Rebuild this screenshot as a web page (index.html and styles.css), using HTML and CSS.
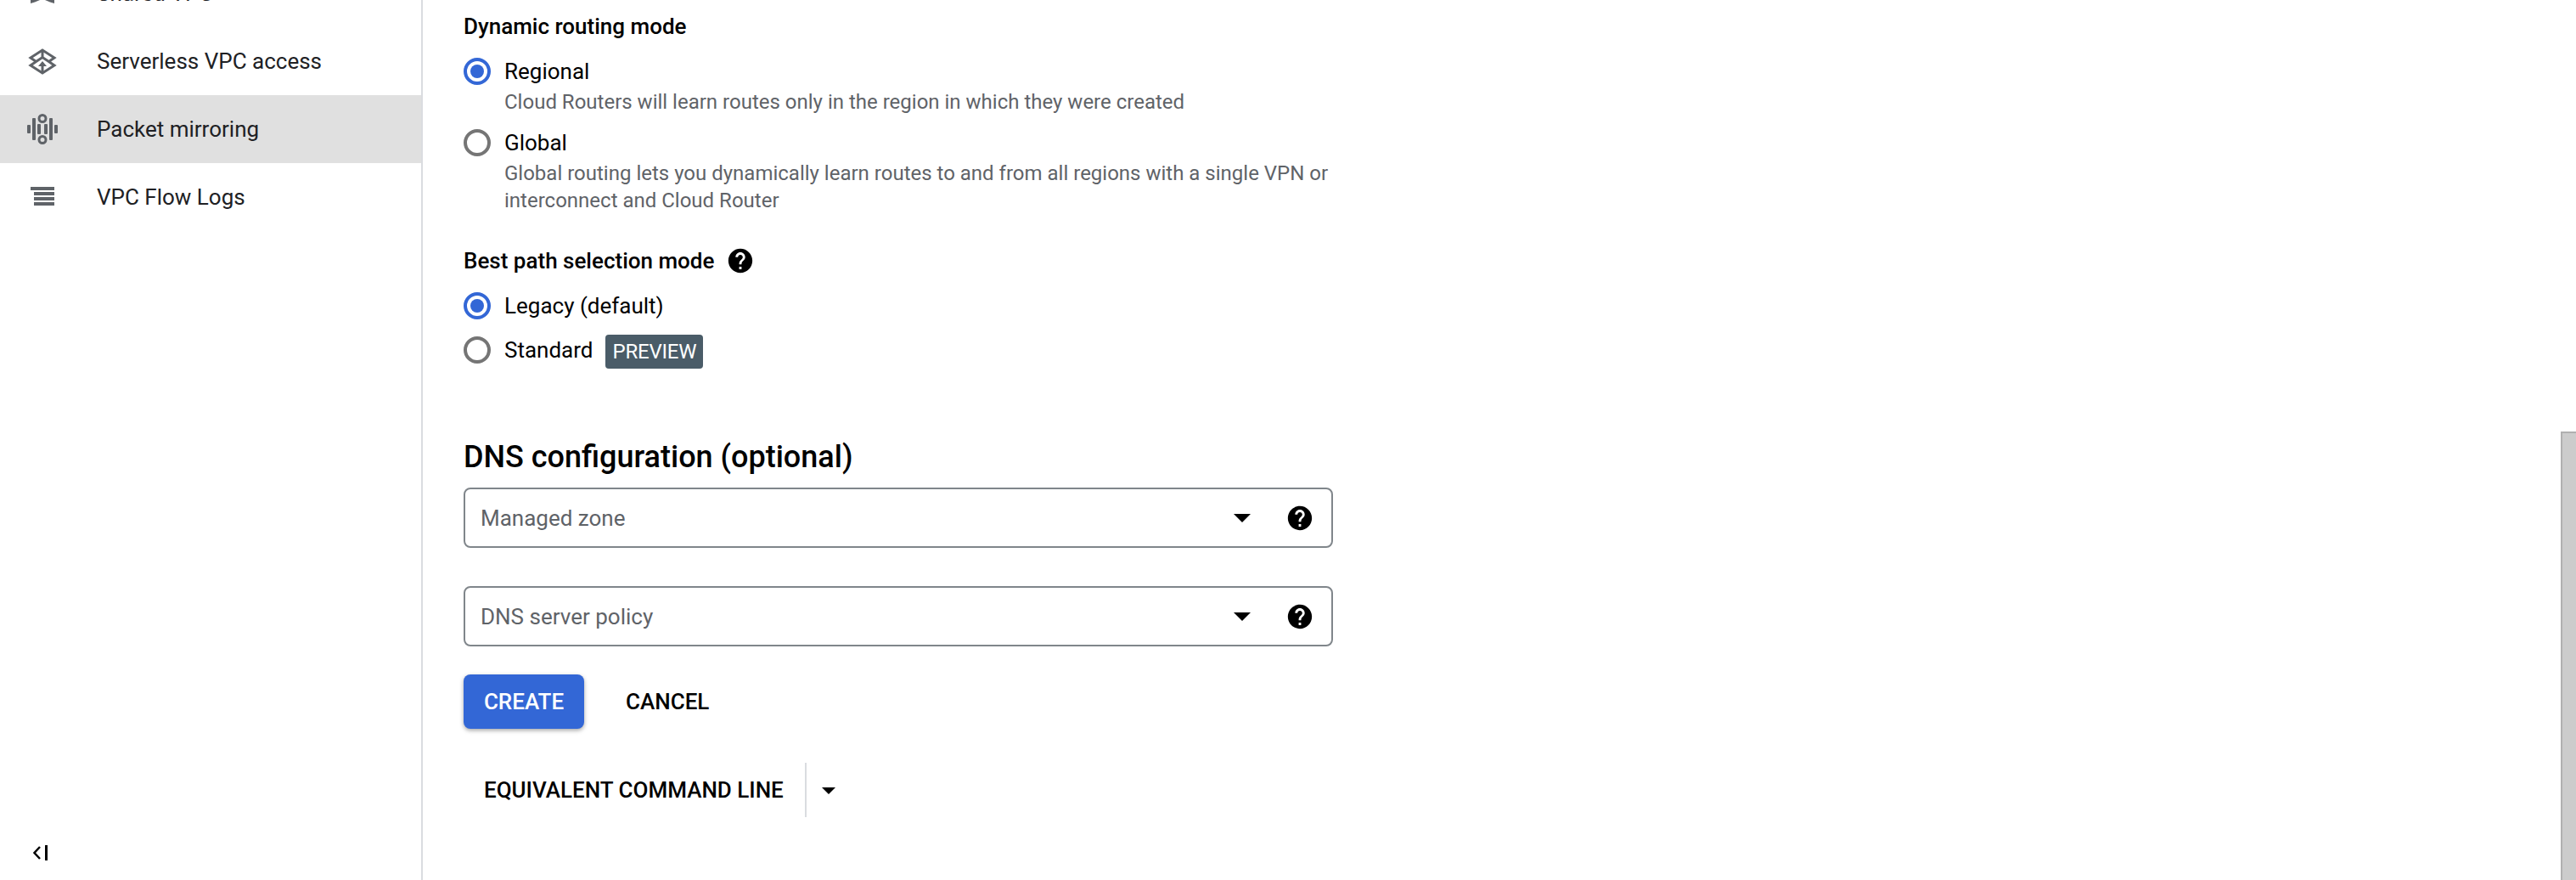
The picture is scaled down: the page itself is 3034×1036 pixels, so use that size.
FILE: index.html

```html
<!DOCTYPE html>
<html lang="en">
<head>
    <meta charset="UTF-8">
    <title>Create a VPC network</title>
    <link rel="stylesheet" href="styles.css">
</head>
<body>
    <div class="page">
        <aside class="sidebar">
            <nav class="nav-list">
                <a class="nav-item">
                    <svg class="nav-icon" viewBox="0 0 48 48"><path d="M10 32h11l-6 2.500 -5 1.500zM38 32h-11l6 2.500 5 1.500z"/></svg>
                    <span>Shared VPC</span>
                </a>
                <a class="nav-item">
                    <svg class="nav-icon" viewBox="0 0 48 48">
                        <path class="line" d="M24 11L10 20l6.500 4.500L10 29l14 9 14-9-6.500-4.500L38 20zM16.500 24.500L24 19.500l7.500 5M24 11v8"/>
                        <path d="M24 24l-5 6h3.500v7h3v-7H29z"/>
                    </svg>
                    <span>Serverless VPC access</span>
                </a>
                <a class="nav-item active">
                    <svg class="nav-icon" viewBox="0 0 48 48">
                        <rect x="6" y="19" width="4" height="10" rx="1"/>
                        <rect x="12" y="11" width="4" height="26" rx="1"/>
                        <rect x="18" y="18" width="4" height="12" rx="1"/>
                        <rect x="26" y="18" width="4" height="12" rx="1"/>
                        <rect x="32" y="11" width="4" height="26" rx="1"/>
                        <rect x="38" y="19" width="4" height="10" rx="1"/>
                        <circle class="line" cx="24" cy="11.500" r="4"/>
                        <circle class="line" cx="24" cy="36.500" r="4"/>
                    </svg>
                    <span>Packet mirroring</span>
                </a>
                <a class="nav-item">
                    <svg class="nav-icon" viewBox="0 0 48 48">
                        <rect x="10" y="12" width="28" height="4"/>
                        <rect x="14" y="18" width="24" height="4"/>
                        <rect x="14" y="24" width="24" height="4"/>
                        <rect x="14" y="30" width="24" height="4"/>
                    </svg>
                    <span>VPC Flow Logs</span>
                </a>
            </nav>
            <button class="collapse-btn">
                <svg viewBox="0 0 20 18" width="20" height="18"><path d="M9 2L2.500 9 9 16" fill="none" stroke="#000" stroke-width="2.500"/><rect x="15" y="0" width="3" height="18" fill="#000"/></svg>
            </button>
        </aside>

        <main class="content">
            <h3 class="group-title">Dynamic routing mode</h3>
            <div class="radio-row checked">
                <span class="radio"></span>
                <div class="radio-text">
                    <div class="radio-label">Regional</div>
                    <div class="radio-help">Cloud Routers will learn routes only in the region in which they were created</div>
                </div>
            </div>
            <div class="radio-row">
                <span class="radio"></span>
                <div class="radio-text">
                    <div class="radio-label">Global</div>
                    <div class="radio-help">Global routing lets you dynamically learn routes to and from all regions with a single VPN or<br>interconnect and Cloud Router</div>
                </div>
            </div>

            <h3 class="group-title path-title">
                Best path selection mode
                <svg class="help-icon" viewBox="0 0 24 24"><path d="M12 2C6.480 2 2 6.480 2 12s4.480 10 10 10 10-4.480 10-10S17.520 2 12 2zm1 17h-2v-2h2v2zm2.070-7.750l-.9.920C13.450 12.900 13 13.500 13 15h-2v-.5c0-1.100.45-2.100 1.170-2.830l1.240-1.260c.37-.36.59-.86.59-1.410 0-1.100-.9-2-2-2s-2 .9-2 2H8c0-2.210 1.790-4 4-4s4 1.790 4 4c0 .88-.36 1.680-.93 2.250z"/></svg>
            </h3>
            <div class="radio-row compact checked">
                <span class="radio"></span>
                <div class="radio-label">Legacy (default)</div>
            </div>
            <div class="radio-row compact">
                <span class="radio"></span>
                <div class="radio-label">Standard</div>
                <span class="badge">PREVIEW</span>
            </div>

            <h2 class="section-title">DNS configuration (optional)</h2>
            <div class="select-field">
                <span class="select-text">Managed zone</span>
                <span class="caret"></span>
                <svg class="help-icon" viewBox="0 0 24 24"><path d="M12 2C6.480 2 2 6.480 2 12s4.480 10 10 10 10-4.480 10-10S17.520 2 12 2zm1 17h-2v-2h2v2zm2.070-7.750l-.9.920C13.450 12.900 13 13.500 13 15h-2v-.5c0-1.100.45-2.100 1.170-2.830l1.240-1.260c.37-.36.59-.86.59-1.410 0-1.100-.9-2-2-2s-2 .9-2 2H8c0-2.210 1.790-4 4-4s4 1.790 4 4c0 .88-.36 1.680-.93 2.250z"/></svg>
            </div>
            <div class="select-field">
                <span class="select-text">DNS server policy</span>
                <span class="caret"></span>
                <svg class="help-icon" viewBox="0 0 24 24"><path d="M12 2C6.480 2 2 6.480 2 12s4.480 10 10 10 10-4.480 10-10S17.520 2 12 2zm1 17h-2v-2h2v2zm2.070-7.750l-.9.920C13.450 12.900 13 13.500 13 15h-2v-.5c0-1.100.45-2.100 1.170-2.830l1.240-1.260c.37-.36.59-.86.59-1.410 0-1.100-.9-2-2-2s-2 .9-2 2H8c0-2.210 1.790-4 4-4s4 1.790 4 4c0 .88-.36 1.680-.93 2.250z"/></svg>
            </div>

            <div class="actions">
                <button class="btn btn-primary">CREATE</button>
                <button class="btn btn-text">CANCEL</button>
            </div>
            <div class="command-line">
                <button class="btn btn-command">EQUIVALENT COMMAND LINE</button>
                <span class="command-divider"></span>
                <span class="caret small"></span>
            </div>
        </main>
    </div>
    <div class="scroll-thumb"></div>
</body>
</html>
```

FILE: styles.css

```css
html, body {
    margin: 0;
    padding: 0;
    height: 100%;
    overflow: hidden;
    background: #fff;
}
body {
    font-family: Roboto, sans-serif;
    font-size: 26px;
    color: #000;
}
.page {
    display: flex;
    height: 1036px;
}
.sidebar {
    width: 496px;
    flex-shrink: 0;
    display: flex;
    flex-direction: column;
    border-right: 2px solid #dadce0;
    overflow: hidden;
}
.nav-list {
    margin-top: -48px;
}
.nav-item {
    display: flex;
    align-items: center;
    height: 80px;
    padding-left: 26px;
    color: #202124;
}
.nav-item.active {
    background: #e0e0e0;
}
.nav-icon {
    width: 48px;
    height: 48px;
    margin-right: 40px;
    fill: #5f6368;
}
.nav-icon .line {
    fill: none;
    stroke: #5f6368;
    stroke-width: 3;
}
.collapse-btn {
    margin-top: auto;
    margin-bottom: 23px;
    margin-left: 38px;
    padding: 0;
    width: 20px;
    height: 18px;
    border: none;
    background: none;
    display: block;
}
.content {
    padding: 15px 0 0 48px;
    width: 1024px;
}
.group-title {
    margin: 0;
    font-size: 26px;
    font-weight: 500;
    line-height: 32px;
    display: flex;
    align-items: center;
}
.path-title {
    margin-top: 38px;
}
.path-title .help-icon {
    margin-left: 14px;
}
.radio-row {
    display: flex;
    margin-top: 21px;
}
.radio-row + .radio-row {
    margin-top: 16px;
}
.radio-row.compact {
    align-items: center;
    height: 32px;
    margin-top: 20px;
}
.radio {
    width: 32px;
    height: 32px;
    box-sizing: border-box;
    border: 4px solid #757575;
    border-radius: 50%;
    flex-shrink: 0;
    margin-right: 16px;
    position: relative;
}
.checked .radio {
    border-color: #3367d6;
}
.checked .radio::after {
    content: "";
    position: absolute;
    left: 4px;
    top: 4px;
    width: 16px;
    height: 16px;
    border-radius: 50%;
    background: #3367d6;
}
.radio-label {
    font-size: 26px;
    line-height: 32px;
}
.radio-help {
    font-size: 24px;
    line-height: 32px;
    color: #5f6368;
    margin-top: 4px;
}
.badge {
    background: #4a5c68;
    color: #fff;
    font-size: 24px;
    line-height: 40px;
    padding: 0 8px;
    border-radius: 4px;
    margin-left: 15px;
    margin-top: 4px;
    letter-spacing: -0.2px;
}
.section-title {
    margin: 0;
    margin-top: 88px;
    font-size: 36px;
    font-weight: 500;
    line-height: 44px;
}
.select-field {
    display: flex;
    align-items: center;
    box-sizing: border-box;
    width: 1024px;
    height: 71px;
    margin-top: 14px;
    padding: 0 20px 0 18px;
    border: 2px solid #80868b;
    border-radius: 8px;
}
.select-field + .select-field {
    margin-top: 45px;
}
.select-text {
    flex: 1;
    font-size: 26px;
    color: #5f6368;
}
.caret {
    width: 0;
    height: 0;
    border-left: 10px solid transparent;
    border-right: 10px solid transparent;
    border-top: 10px solid #000;
    margin-right: 41px;
}
.caret.small {
    border-left-width: 8px;
    border-right-width: 8px;
    border-top-width: 8px;
    margin: 2px 0 0 18px;
}
.help-icon {
    width: 34px;
    height: 34px;
    fill: #000;
}
.actions {
    display: flex;
    align-items: center;
    margin-top: 33px;
}
.btn {
    font-family: Roboto, sans-serif;
    font-size: 26px;
    font-weight: 500;
    border: none;
    background: none;
    padding: 0;
    color: #000;
}
.btn-primary {
    width: 142px;
    height: 64px;
    background: #3367d6;
    color: #fff;
    border-radius: 8px;
    box-shadow: 0 2px 5px rgba(0, 0, 0, 0.35);
}
.btn-text {
    margin-left: 49px;
}
.command-line {
    display: flex;
    align-items: center;
    height: 64px;
    margin-top: 40px;
    padding-left: 24px;
}
.command-divider {
    width: 2px;
    height: 64px;
    background: #dadce0;
    margin-left: 25px;
}
.scroll-thumb {
    position: absolute;
    left: 3016px;
    top: 508px;
    width: 18px;
    height: 528px;
    box-sizing: border-box;
    background: #ccc;
    border-top: 2px solid #b0b0b0;
    border-left: 2px solid #b0b0b0;
}
```
